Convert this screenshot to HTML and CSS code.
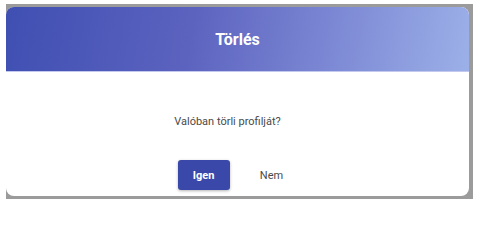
FILE: index.html
```html
<!DOCTYPE html>
<html lang="hu">
<head>
<meta charset="utf-8">
<link rel="stylesheet" href="styles.css">
</head>
<body>
<div class="backdrop">
  <div class="dialog">
    <div class="dialog-header">Törlés</div>
    <div class="dialog-content">Valóban törli profilját?</div>
    <div class="dialog-actions">
      <button class="btn btn-primary">Igen</button>
      <button class="btn btn-text">Nem</button>
    </div>
  </div>
</div>
</body>
</html>
```
FILE: styles.css
```css
html, body {
  margin: 0;
  padding: 0;
  background: #ffffff;
  font-family: Roboto, "Liberation Sans", sans-serif;
}
.backdrop {
  margin: 4px 0 0 6px;
  width: 467px;
  height: 195px;
  background: #9b9b9b;
  padding: 3px 4px 3px 0;
  box-sizing: border-box;
}
.dialog {
  width: 463px;
  height: 189px;
  background: #ffffff;
  border-radius: 8px;
  overflow: hidden;
  display: flex;
  flex-direction: column;
}
.dialog-header {
  height: 65px;
  display: flex;
  align-items: center;
  justify-content: center;
  color: #ffffff;
  font-weight: 700;
  font-size: 16px;
  background: linear-gradient(100deg, #3f4fb2 0%, #5c63bf 40%, #7c88d4 70%, #9cb0e8 100%);
  border-bottom: 1px solid #c3c8ee;
  box-sizing: border-box;
}
.dialog-content {
  padding-top: 43px;
  height: 14px;
  line-height: 14px;
  font-size: 11px;
  color: #4a4a4a;
  text-align: center;
  padding-right: 20px;
}
.dialog-actions {
  display: flex;
  justify-content: center;
  gap: 16px;
  margin-top: 31px;
}
.btn {
  width: 52px;
  height: 30px;
  border: none;
  border-radius: 3px;
  font-family: Roboto, "Liberation Sans", sans-serif;
  font-size: 11px;
  padding: 0;
  cursor: pointer;
}
.btn-primary {
  background: #3a49a9;
  color: #ffffff;
  font-weight: 700;
  box-shadow: 0 1px 3px rgba(0,0,0,0.3);
}
.btn-text {
  background: transparent;
  color: #4a4a4a;
}
```
